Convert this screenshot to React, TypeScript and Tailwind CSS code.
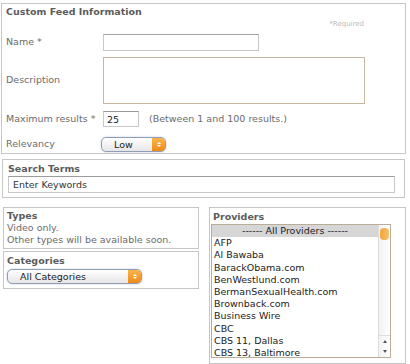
const providers = [
  'AFP',
  'Al Bawaba',
  'BarackObama.com',
  'BenWestlund.com',
  'BermanSexualHealth.com',
  'Brownback.com',
  'Business Wire',
  'CBC',
  'CBS 11, Dallas',
  'CBS 13, Baltimore',
]

function AquaSelect({ label, width }: { label: string; width: string }) {
  return (
    <div
      className={`flex h-[15px] ${width} items-stretch overflow-hidden rounded-[5px] border border-[#8f9db5] bg-gradient-to-b from-white to-[#e6e6e6] shadow-[0_0_2px_#b7c4dc]`}
    >
      <span className="flex-1 pl-[12px] text-[9.5px] leading-[13px] text-[#222]">{label}</span>
      <span className="flex w-[13px] flex-col items-center justify-center gap-[1px] bg-gradient-to-b from-[#f9b54a] to-[#ef8a12]">
        <span className="h-0 w-0 border-x-[2px] border-b-[2px] border-x-transparent border-b-white" />
        <span className="h-0 w-0 border-x-[2px] border-t-[2px] border-x-transparent border-t-white" />
      </span>
    </div>
  )
}

function App() {
  return (
    <main className="h-[364px] w-[410px] bg-white pl-[1px] pt-[3px] font-['DejaVu_Sans',Verdana,sans-serif] text-[9.5px] text-[#6b6b6b]">
      <section className="h-[151px] w-[405px] border border-[#c6c6c6] px-[4px]">
        <h2 className="h-[14px] pt-[1px] text-[9.5px] font-bold leading-[13px] text-[#5c5c5c]">Custom Feed Information</h2>
        <div className="h-[10px] pr-[37px] text-right text-[7px] leading-[12px] text-[#bbb]">*Required</div>

        <div className="mt-[6px] flex items-center">
          <label className="w-[97px]">Name *</label>
          <input className="h-[17px] w-[156px] border border-[#c8c8c8] border-t-[#a0a0a0] bg-white" />
        </div>

        <div className="mt-[6px] flex items-center">
          <label className="w-[97px]">Description</label>
          <textarea className="h-[47px] w-[262px] resize-none border border-[#c7b79c] bg-white" />
        </div>

        <div className="mt-[7px] flex items-center">
          <label className="w-[97px]">Maximum results *</label>
          <input
            defaultValue="25"
            className="h-[16px] w-[36px] border border-[#c8c8c8] border-t-[#999] bg-white px-[3px] text-[#222]"
          />
          <span className="ml-[10px]">(Between 1 and 100 results.)</span>
        </div>

        <div className="mt-[10px] flex items-center">
          <label className="w-[95px]">Relevancy</label>
          <AquaSelect label="Low" width="w-[65px]" />
        </div>
      </section>

      <section className="ml-[1px] mt-[5px] h-[39px] w-[403px] border border-[#c6c6c6] px-[5px]">
        <h2 className="h-[16px] pt-[2px] font-bold leading-[13px] text-[#5c5c5c]">Search Terms</h2>
        <input
          defaultValue="Enter Keywords"
          className="block h-[17px] w-[387px] border border-[#c8c8c8] border-t-[#9c9c9c] bg-white px-[4px] text-[#333]"
        />
      </section>

      <div className="mt-[9px] flex">
        <div className="ml-[2px] flex w-[196px] flex-col gap-[2px]">
          <section className="h-[42px] border border-[#c6c6c6] px-[3px] leading-[12px]">
            <h2 className="pt-[2px] font-bold text-[#5c5c5c]">Types</h2>
            <p>Video only.</p>
            <p>Other types will be available soon.</p>
          </section>
          <section className="h-[38px] border border-[#c6c6c6] px-[3px]">
            <h2 className="h-[17px] pt-[2px] font-bold leading-[13px] text-[#5c5c5c]">Categories</h2>
            <AquaSelect label="All Categories" width="w-[135px]" />
          </section>
        </div>

        <section className="ml-[10px] h-[157px] w-[197px] border border-[#c6c6c6] px-[1px]">
          <h2 className="h-[16px] pl-[2px] pt-[2px] font-bold leading-[13px] text-[#5c5c5c]">Providers</h2>
          <div className="flex h-[134px] w-[180px] border border-[#b9ad98] bg-white">
            <ul className="flex-1 leading-[12.2px] text-[#222]">
              <li className="bg-[#d6d6d6] text-center">------ All Providers ------</li>
              {providers.map((p) => (
                <li key={p} className="pl-[2px]">
                  {p}
                </li>
              ))}
            </ul>
            <div className="flex w-[12px] flex-col border-l border-[#ddd] bg-gradient-to-r from-[#f2f2f2] to-white">
              <div className="mx-auto mt-[3px] h-[12px] w-[9px] rounded-[4px] bg-gradient-to-r from-[#f2a43a] to-[#f7c06a]" />
              <div className="flex-1" />
              <div className="flex h-[22px] flex-col items-center justify-around border-t border-[#ddd]">
                <span className="h-0 w-0 border-x-[2px] border-b-[3px] border-x-transparent border-b-[#555]" />
                <span className="h-0 w-0 border-x-[2px] border-t-[3px] border-x-transparent border-t-[#555]" />
              </div>
            </div>
          </div>
        </section>
      </div>
    </main>
  )
}

export default App
